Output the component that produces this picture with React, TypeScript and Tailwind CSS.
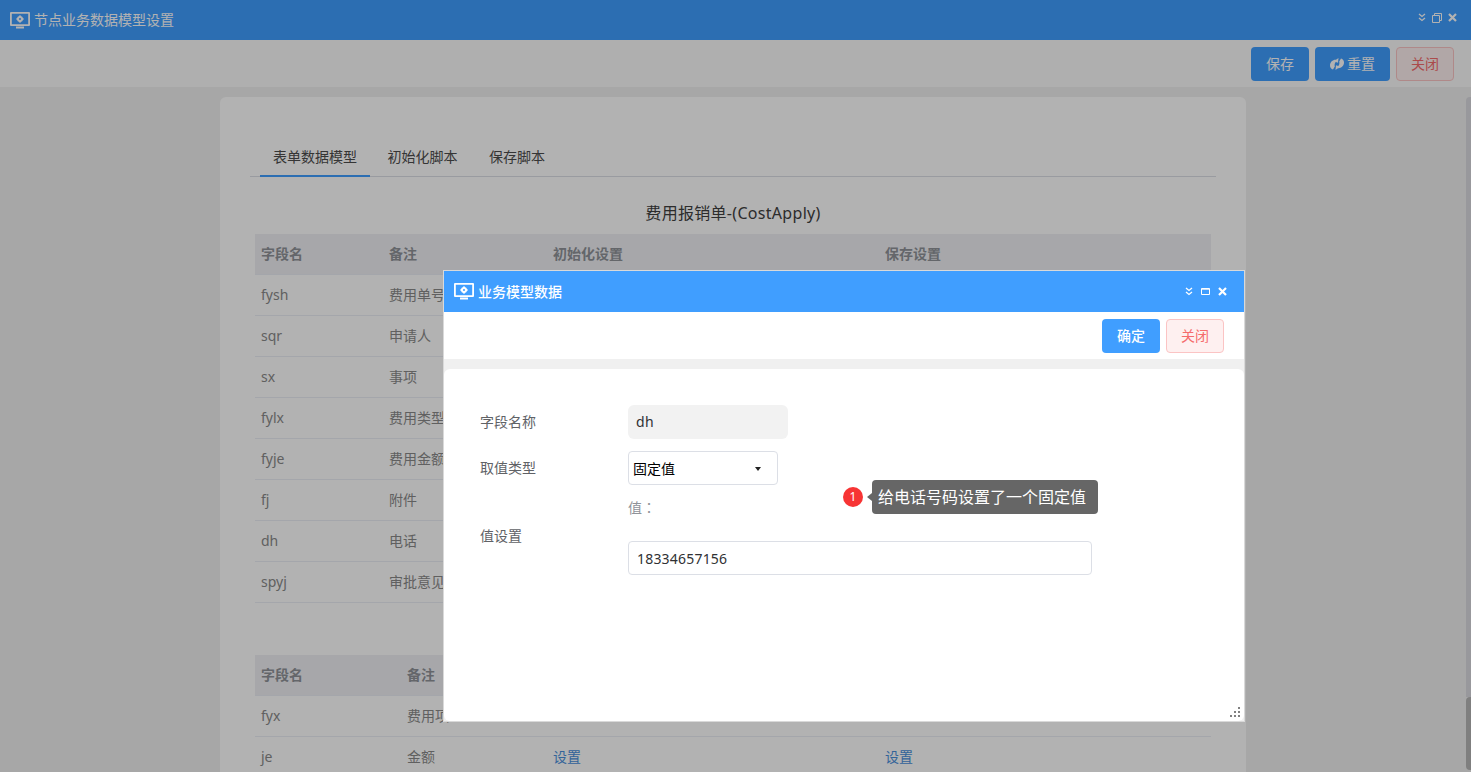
const FONT = 'font-["Noto_Sans","Noto_Sans_CJK_SC",sans-serif]'

const fields = [
  ['fysh', '费用单号'],
  ['sqr', '申请人'],
  ['sx', '事项'],
  ['fylx', '费用类型'],
  ['fyje', '费用金额'],
  ['fj', '附件'],
  ['dh', '电话'],
  ['spyj', '审批意见'],
]

function MonitorIcon({ className }: { className?: string }) {
  return (
    <svg viewBox="0 0 20 17" className={className} fill="currentColor">
      <path d="M1 0h18a1 1 0 0 1 1 1v12a1 1 0 0 1-1 1H1a1 1 0 0 1-1-1V1a1 1 0 0 1 1-1Zm.8 1.800v10.400h16.400V1.800H1.800Z" fillRule="evenodd" />
      <path d="M6 14.500h8v2H6z" />
      <circle cx="10" cy="7" r="2" fill="none" stroke="currentColor" strokeWidth="2" />
      <path d="M9 3.500h2v1.500H9zM9 9h2v1.500H9zM6.500 6h1.500v2H6.500zM12 6h1.500v2H12z" />
    </svg>
  )
}

function WindowControls({ single }: { single?: boolean }) {
  return (
    <div className={`flex items-center ${single ? 'gap-2' : 'gap-[6px]'}`}>
      <svg viewBox="0 0 8 9" className="w-2 h-[9px]" fill="none" stroke="currentColor" strokeWidth="1.3">
        <path d="M1 1l3 2.500L7 1M1 5l3 2.500L7 5" />
      </svg>
      {single ? (
        <svg viewBox="0 0 9 7" className="w-[9px] h-[7px]" fill="none" stroke="currentColor">
          <path d="M.5.5h8v6h-8z" />
          <path d="M.5 1.200h8" />
        </svg>
      ) : (
        <svg viewBox="0 0 10 10" className="w-2.5 h-2.5" fill="none" stroke="currentColor">
          <path d="M.5 2.500h7v7h-7zM2.500 2.500v-2h7v7h-2" />
        </svg>
      )}
      <svg viewBox="0 0 9 9" className="w-[9px] h-[9px]" fill="none" stroke="currentColor" strokeWidth="2.2">
        <path d="M1 1l7 7M8 1L1 8" />
      </svg>
    </div>
  )
}

function ResetIcon() {
  return (
    <svg viewBox="0 0 14 12" className="w-3.5 h-3" fill="currentColor">
      <path d="M0 7.500C0 4 3 1.500 6 1.800L8.500 0 8 4.800 5.800 4C4.800 5 4.300 6.500 4.800 8.500L3 11.500C1.200 11 0 9.500 0 7.500Z" />
      <path d="M14 4.500C14 8 11 10.500 8 10.200L5.500 12 6 7.200 8.200 8C9.200 7 9.700 5.500 9.200 3.500L11 .5C12.800 1 14 2.500 14 4.500Z" />
    </svg>
  )
}

function Row({ name, note, head, noteCol, links }: { name: string; note: string; head?: boolean; noteCol: string; links?: boolean }) {
  return (
    <div className={`flex items-center h-[41px] border-b border-[#ebeef5] text-sm ${head ? 'bg-[#eff0f4] font-bold text-[#909399]' : 'text-[#8a8a8a]'}`}>
      <div className={`pl-1.5 shrink-0 ${noteCol}`}>{name}</div>
      <div className="flex-1 min-w-0 whitespace-nowrap">{note}</div>
      <div className="w-[332px] shrink-0 text-[#4a90dc]">{head ? <span className="text-[#909399]">初始化设置</span> : links && '设置'}</div>
      <div className="w-[326px] shrink-0 text-[#4a90dc]">{head ? <span className="text-[#909399]">保存设置</span> : links && '设置'}</div>
    </div>
  )
}

export default function App() {
  return (
    <div className={`relative h-[772px] overflow-hidden bg-[#f0f0f0] ${FONT}`}>
      <header className="flex items-center justify-between h-10 pl-2.5 pr-[14px] bg-[#409eff] text-white">
        <div className="flex items-center gap-1">
          <MonitorIcon className="w-5 h-[17px]" />
          <span className="text-sm">节点业务数据模型设置</span>
        </div>
        <div className="-mt-[5px]">
          <WindowControls />
        </div>
      </header>

      <div className="flex justify-end gap-1.5 h-[47px] pt-[7px] pr-[17px] bg-[#fbfbfb]">
        <button className="w-[58px] h-[34px] rounded-sm bg-[#409eff] text-sm text-white">保存</button>
        <button className="flex items-center justify-center gap-[3px] w-[75px] h-[34px] rounded-sm bg-[#409eff] text-sm text-white">
          <ResetIcon />
          重置
        </button>
        <button className="w-[58px] h-[34px] rounded-sm border border-[#fbc4c4] bg-[#fef0f0] text-sm text-[#f56c6c]">关闭</button>
      </div>

      <main className="mt-2.5 ml-[220px] w-[1026px] rounded-t-md bg-white pt-[41px] px-[30px] h-[700px]">
        <div className="flex h-[39px] border-b border-[#dcdfe6] pl-2.5 text-sm text-[#4d4d4d]">
          <div className="w-[110px] h-[39px] pt-[9px] text-center border-b-2 border-[#409eff]">表单数据模型</div>
          <div className="w-[105px] pt-[9px] text-center">初始化脚本</div>
          <div className="w-[84px] pt-[9px] text-center">保存脚本</div>
        </div>
        <h2 className="mt-6 h-[33px] text-center text-base leading-[24px] tracking-[0.3px] text-[#404040]">费用报销单-(CostApply)</h2>
        <div className="mx-[5px]">
          <Row head name="字段名" note="备注" noteCol="w-[134px]" />
          {fields.map(([name, note]) => (
            <Row key={name} name={name} note={note} noteCol="w-[134px]" />
          ))}
          <div className="mt-[52px]">
            <Row head name="字段名" note="备注" noteCol="w-[152px]" />
            <Row name="fyx" note="费用项" noteCol="w-[152px]" />
            <Row name="je" note="金额" noteCol="w-[152px]" links />
          </div>
        </div>
      </main>

      <div className="absolute inset-0 bg-black/30" />
      <div className="absolute right-0 top-[97px] w-[5px] h-[600px] rounded-tl-sm bg-[#98989c]" />
      <div className="absolute right-0 top-[697px] w-[5px] h-[73px] bg-[#7f7f7f] rounded-l-sm" />

      <section className="absolute left-[443px] top-[270px] w-[802px] h-[452px] flex flex-col border border-[#d9d9d9] bg-white">
        <div className="flex items-center justify-between h-[41px] shrink-0 pl-2.5 pr-[17px] bg-[#409eff] text-white">
          <div className="flex items-center gap-1">
            <MonitorIcon className="w-5 h-[17px]" />
            <span className="text-sm font-medium">业务模型数据</span>
          </div>
          <WindowControls single />
        </div>
        <div className="flex justify-end gap-1.5 h-[47px] shrink-0 pt-[7px] pr-5">
          <button className="w-[58px] h-[34px] rounded-sm bg-[#409eff] text-sm font-medium text-white">确定</button>
          <button className="w-[58px] h-[34px] rounded-sm border border-[#fbc4c4] bg-[#fef0f0] text-sm text-[#f56c6c]">关闭</button>
        </div>
        <div className="flex-1 bg-[#f0f0f0] pt-2.5">
          <div className="relative h-full rounded-md bg-white pl-9 pt-9 text-sm text-[#606266]">
            <div className="flex items-center h-[34px]">
              <label className="w-[148px]">字段名称</label>
              <div className="flex items-center w-40 h-[34px] pl-2 rounded-md bg-[#f2f2f2] text-sm tracking-[0.3px] text-[#303133]">dh</div>
            </div>
            <div className="flex mt-3">
              <label className="w-[148px] pt-[7px]">取值类型</label>
              <div className="flex items-center justify-between w-[150px] h-[34px] pl-1 pr-4 pt-0.5 rounded border border-[#dcdfe6] text-sm text-black">
                固定值
                <span className="w-0 h-0 border-x-[3.500px] border-x-transparent border-t-[4px] border-t-[#222]" />
              </div>
            </div>
            <div className="flex mt-3">
              <label className="w-[148px] pt-[29px]">值设置</label>
              <div>
                <div className='h-11 text-sm text-[#909399] font-["Noto_Sans_CJK_TC",sans-serif]'>值：</div>
                <div className="flex items-center w-[464px] h-[34px] pl-2 pt-0.5 rounded border border-[#dcdfe6] text-sm tracking-[0.2px] text-[#303133]">18334657156</div>
              </div>
            </div>

            <div className="absolute left-[399px] top-[111px] flex items-center">
              <span className="flex items-center justify-center w-5 h-5 rounded-full bg-[#f73434] text-xs text-white">1</span>
              <span className="ml-[4px] w-0 h-0 border-y-[4px] border-y-transparent border-r-[5px] border-r-[#666]" />
              <div className="flex items-center w-[226px] h-[34px] pl-1.5 rounded-sm bg-[#666] text-base text-white">给电话号码设置了一个固定值</div>
            </div>

            <svg viewBox="0 0 11 11" className="absolute right-[3px] bottom-[3px] w-[11px] h-[11px]" fill="#808080">
              <path d="M8 0h2v2H8zM4 4h2v2H4zM8 4h2v2H8zM0 8h2v2H0zM4 8h2v2H4zM8 8h2v2H8z" />
            </svg>
          </div>
        </div>
      </section>
    </div>
  )
}
